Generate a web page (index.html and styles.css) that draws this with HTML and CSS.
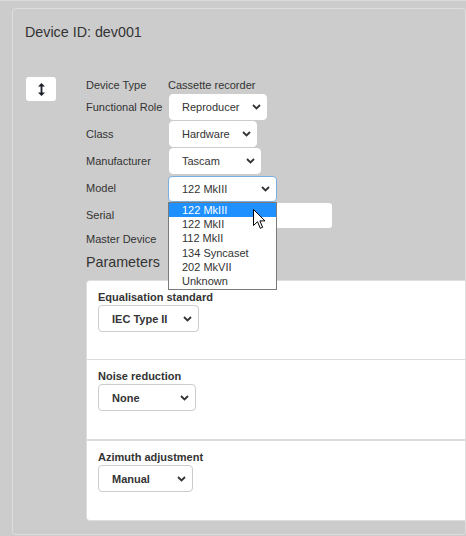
FILE: index.html
```html
<!DOCTYPE html>
<html lang="en">
<head>
<meta charset="utf-8">
<title>Device</title>
<link rel="stylesheet" href="styles.css">
</head>
<body>
<div class="page">
  <div class="panel">
    <h1 class="title">Device ID: dev001</h1>
    <div class="main">
      <button class="move-btn" type="button" aria-label="Move">
        <svg width="7" height="13" viewBox="0 0 7 13"><path d="M3.5 0L7 3.6H0Z M2.6 3h1.8v7H2.6Z M0 9.4H7L3.5 13Z" fill="#1c1f2a"/></svg>
      </button>
      <div class="form">
        <div class="fields">
          <div class="label">Device Type</div>
          <div class="value text">Cassette recorder</div>

          <div class="label">Functional Role</div>
          <div class="value"><div class="select w-role"><span>Reproducer</span><svg class="chev" width="9" height="6" viewBox="0 0 9 6"><path d="M1 1l3.5 3.5L8 1" fill="none" stroke="#333" stroke-width="1.8"/></svg></div></div>

          <div class="label">Class</div>
          <div class="value"><div class="select w-class"><span>Hardware</span><svg class="chev" width="9" height="6" viewBox="0 0 9 6"><path d="M1 1l3.5 3.5L8 1" fill="none" stroke="#333" stroke-width="1.8"/></svg></div></div>

          <div class="label">Manufacturer</div>
          <div class="value"><div class="select w-maker"><span>Tascam</span><svg class="chev" width="9" height="6" viewBox="0 0 9 6"><path d="M1 1l3.5 3.5L8 1" fill="none" stroke="#333" stroke-width="1.8"/></svg></div></div>

          <div class="label">Model</div>
          <div class="value model-cell">
            <div class="select w-model focused"><span>122 MkIII</span><svg class="chev" width="9" height="6" viewBox="0 0 9 6"><path d="M1 1l3.5 3.5L8 1" fill="none" stroke="#333" stroke-width="1.8"/></svg></div>
            <ul class="dropdown">
              <li class="active">122 MkIII</li>
              <li>122 MkII</li>
              <li>112 MkII</li>
              <li>134 Syncaset</li>
              <li>202 MkVII</li>
              <li>Unknown</li>
              <svg class="cursor" width="13" height="21" viewBox="0 0 13 21"><path d="M0.5 0.5V16.5L4.5 12.7L7.3 19.3L9.6 18.3L6.9 11.9H12Z" fill="#fff" stroke="#000" stroke-width="1" stroke-linejoin="miter"/></svg>
            </ul>
          </div>

          <div class="label">Serial</div>
          <div class="value"><div class="input w-serial"></div></div>

          <div class="label">Master Device</div>
          <div class="value"></div>
        </div>

        <h2 class="params-title">Parameters</h2>
        <div class="card">
          <section class="param">
            <div class="param-label">Equalisation standard</div>
            <div class="pselect w-eq"><span>IEC Type II</span><svg class="chev" width="9" height="6" viewBox="0 0 9 6"><path d="M1 1l3.5 3.5L8 1" fill="none" stroke="#333" stroke-width="1.8"/></svg></div>
          </section>
          <section class="param sep-thin">
            <div class="param-label">Noise reduction</div>
            <div class="pselect w-nr"><span>None</span><svg class="chev" width="9" height="6" viewBox="0 0 9 6"><path d="M1 1l3.5 3.5L8 1" fill="none" stroke="#333" stroke-width="1.8"/></svg></div>
          </section>
          <section class="param sep-thick">
            <div class="param-label">Azimuth adjustment</div>
            <div class="pselect w-az"><span>Manual</span><svg class="chev" width="9" height="6" viewBox="0 0 9 6"><path d="M1 1l3.5 3.5L8 1" fill="none" stroke="#333" stroke-width="1.8"/></svg></div>
          </section>
        </div>
      </div>
    </div>
  </div>
</div>
</body>
</html>
```

FILE: styles.css
```css
* { box-sizing: border-box; }

html, body {
  margin: 0;
  padding: 0;
  background: #cccccc;
  font-family: "Liberation Sans", Arial, sans-serif;
  color: #333;
}

.page {
  width: 466px;
  height: 536px;
  border-top: 1px solid #dcdcdc;
  overflow: hidden;
}

.panel {
  margin: 7px 0 0 12px;
  width: 454px;
  height: 527px;
  border: 1px solid #dedede;
  border-radius: 4px;
  padding: 13px 0 0 12px;
  overflow: hidden;
}

.title {
  margin: 0;
  font-size: 14.3px;
  font-weight: normal;
  line-height: 20px;
  color: #333;
}

.main {
  display: flex;
  margin-top: 34px;
}

.move-btn {
  width: 30px;
  height: 24px;
  margin: 1px 30px 0 1px;
  padding: 0;
  border: none;
  border-radius: 3px;
  background: #fff;
  display: flex;
  align-items: center;
  justify-content: center;
  flex: none;
}

.form {
  flex: 1;
  min-width: 0;
}

.fields {
  display: grid;
  grid-template-columns: 82px 1fr;
  grid-template-rows: 18px repeat(5, 27px) 20px;
  font-size: 11px;
}

.label {
  align-self: center;
  line-height: 14px;
  margin-top: -1px;
  color: #333;
}

.value {
  align-self: start;
}

.value.text {
  align-self: center;
  line-height: 14px;
}

.select {
  height: 26px;
  margin-left: 1px;
  background: #fff;
  border: 1px solid #fff;
  border-radius: 4px;
  display: flex;
  align-items: center;
  justify-content: space-between;
  padding: 0 5px 0 12px;
  font-size: 11px;
  color: #333;
}

.select.focused {
  margin-left: 0;
  border-color: #7aaee0;
  padding-left: 13px;
  padding-right: 6px;
}

.w-role { width: 98px; }
.w-class { width: 88px; }
.w-maker { width: 92px; }
.w-model { width: 109px; margin-top: 1px; }

.model-cell {
  position: relative;
}

.dropdown {
  position: absolute;
  left: 0;
  top: 27px;
  width: 109px;
  margin: 0;
  padding: 0 0 1px 0;
  list-style: none;
  background: #fff;
  border: 1px solid #7a7a7a;
  z-index: 10;
  font-size: 11px;
}

.dropdown li {
  height: 14.2px;
  line-height: 14px;
  padding-left: 13px;
  color: #333;
}

.dropdown li.active {
  background: #1e90ff;
  color: #fff;
}

.cursor {
  position: absolute;
  left: 84px;
  top: 6px;
}

.input {
  height: 25px;
  margin: 1px 0 0 1px;
  background: #fff;
  border-radius: 3px;
}

.w-serial { width: 163px; }

.params-title {
  margin: 3px 0 0 0;
  font-size: 14.3px;
  font-weight: normal;
  line-height: 20px;
  color: #333;
}

.card {
  margin-top: 8px;
  background: #fff;
  border: 1px solid #dedede;
  border-right: none;
  border-radius: 4px 0 0 4px;
  height: 241px;
}

.param {
  padding: 9px 12px 0 11px;
  height: 78px;
}

.param.sep-thin {
  border-top: 1px solid #dcdcdc;
  height: 80px;
}

.param.sep-thick {
  border-top: 2px solid #dcdcdc;
  height: 81px;
}

.param-label {
  font-size: 11px;
  font-weight: bold;
  line-height: 14px;
  color: #333;
}

.pselect {
  margin-top: 1px;
  height: 27px;
  border: 1px solid #cccccc;
  border-radius: 4px;
  background: #fff;
  display: flex;
  align-items: center;
  justify-content: space-between;
  padding: 0 6px 0 13px;
  font-size: 11px;
  font-weight: bold;
  color: #333;
}

.w-eq { width: 101px; }
.w-nr { width: 98px; }
.w-az { width: 95px; }
```
